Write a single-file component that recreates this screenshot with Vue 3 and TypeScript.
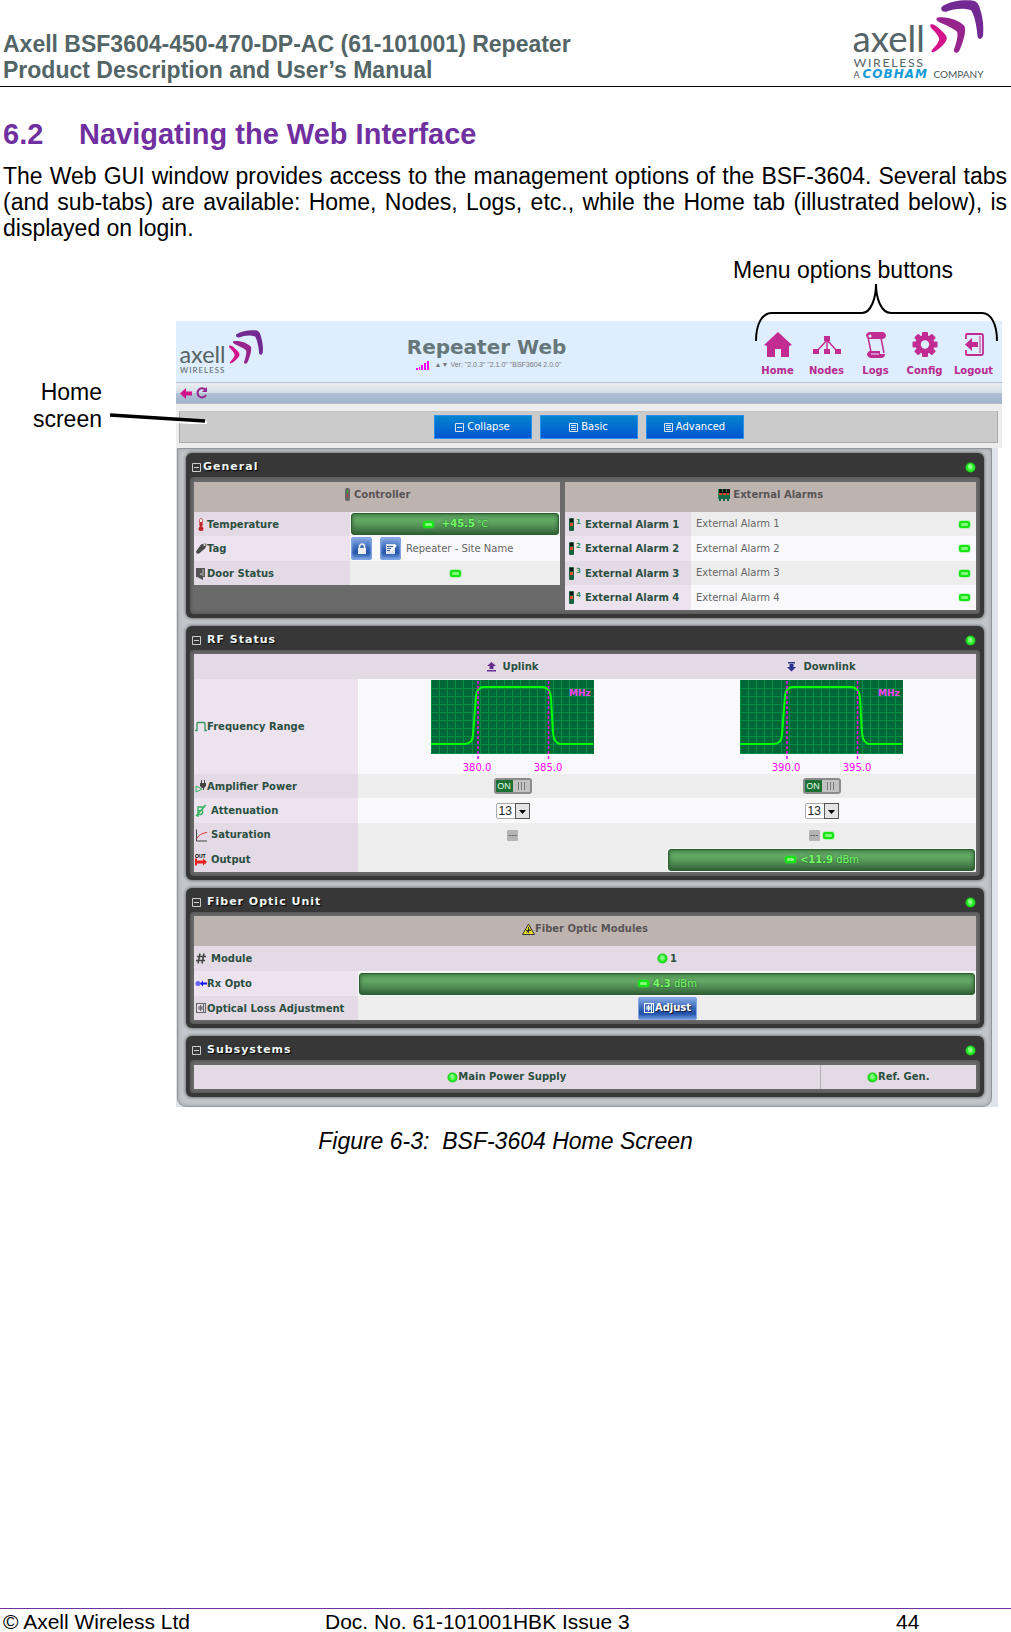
<script setup lang="ts">
import { ref } from 'vue'

interface MenuItem {
  id: string
  label: string
}

interface Band {
  id: string
  low: string
  high: string
}

const menu: MenuItem[] = [
  { id: 'home', label: 'Home' },
  { id: 'nodes', label: 'Nodes' },
  { id: 'logs', label: 'Logs' },
  { id: 'config', label: 'Config' },
  { id: 'logout', label: 'Logout' },
]

const bands: Band[] = [
  { id: 'uplink', low: '380.0', high: '385.0' },
  { id: 'downlink', low: '390.0', high: '395.0' },
]

const alarms: number[] = [1, 2, 3, 4]
const power = ref<Record<string, boolean>>({ uplink: true, downlink: true })
const attenuation = ref<Record<string, string>>({ uplink: '13', downlink: '13' })
</script>

<template>
  <div class="page">
    <svg class="defs" width="0" height="0" aria-hidden="true">
      <defs>
        <radialGradient id="ledFill">
          <stop offset="0" stop-color="#a4ff9c" />
          <stop offset="0.6" stop-color="#2bf02b" />
          <stop offset="1" stop-color="#14c814" />
        </radialGradient>
        <symbol id="axell" viewBox="402 0 390 240" preserveAspectRatio="xMinYMin meet">
          <text x="399" y="157" font-family="Lato, sans-serif" font-size="110" fill="#566466">axell</text>
          <text x="402" y="202" font-family="Lato, sans-serif" font-size="37" letter-spacing="5" fill="#566466">WIRELESS</text>
          <path fill="#d4148c" d="M632 74C640 70 650 77 658 85C670 96 682 106 682 116C680 128 660 148 641 157C636 158 634 154 638 149C648 138 659 126 659 116C656 104 642 90 634 83Z" />
          <path fill="#96248c" d="M652 53C680 47 718 60 735 78C742 98 726 138 719 153C714 161 703 160 703 150C711 130 716 106 713 96C700 83 676 75 660 67C652 63 649 58 652 53Z" />
          <path fill="#722a92" d="M667 20C692 3 730-1 762 2C776 5 780 18 786 42C791 66 794 86 791 106C788 120 776 120 774 108C772 80 765 46 755 31C732 22 702 27 680 35C667 37 662 28 667 20Z" />
        </symbol>
        <symbol id="led" viewBox="0 0 13 9">
          <rect x="0" y="0" width="13" height="9" rx="4" fill="#38f038" opacity="0.3" />
          <rect x="1" y="1" width="11" height="7" rx="2" fill="#14e614" />
          <rect x="3" y="3" width="7" height="3" rx="1" fill="#84fb7a" />
        </symbol>
        <symbol id="dot" viewBox="0 0 11 11">
          <circle cx="5.5" cy="5.5" r="5" fill="url(#ledFill)" />
          <circle cx="5" cy="4" r="2" fill="#9dff96" opacity="0.7" />
        </symbol>
        <symbol id="icon-home" viewBox="0 0 28 26">
          <path fill="#c12b92" d="M14 0L28 13L25 14V25H17V17H11V25H3V14L0 13Z" />
        </symbol>
        <symbol id="icon-nodes" viewBox="0 0 28 26">
          <path fill="none" stroke="#c12b92" stroke-width="1.4" d="M14 8L4 19M14 8V19M14 8L24 19" />
          <path fill="#c12b92" d="M11 4h6v5h-6zM0 17h6v5H0zM11 17h6v5h-6zM22 17h6v5h-6z" />
        </symbol>
        <symbol id="icon-logs" viewBox="0 0 28 26">
          <path fill="none" stroke="#c12b92" stroke-width="1.5" d="M6 5L9 20M19 6L22 21" />
          <path fill="#c12b92" d="M8 0H21Q24 1 24 4Q23 7 20 7H8Q4 6 4 3Q5 0 8 0ZM8 19H18V22H23Q23 25 20 26H9Q5 25 5 22Q6 19 8 19Z" />
          <circle cx="8" cy="4" r="1.6" fill="#deeefe" />
          <path stroke="#deeefe" d="M9 22H17" />
        </symbol>
        <symbol id="icon-config" viewBox="0 0 28 26">
          <g fill="#c12b92">
            <rect v-for="a in [0, 45, 90, 135]" :key="a" x="11" y="0" width="6" height="25" rx="1" :transform="`rotate(${a} 14 12.5)`" />
            <circle cx="14" cy="12.5" r="9.5" />
          </g>
          <circle cx="14" cy="12.5" r="4.2" fill="#deeefe" />
        </symbol>
        <symbol id="icon-logout" viewBox="0 0 28 26">
          <path fill="none" stroke="#c12b92" stroke-width="1.8" d="M6 7V3Q6 2 7 2H21Q23 2 23 4V21Q23 23 21 23H7Q6 23 6 22V18" />
          <path fill="#c12b92" d="M5 12.5L12 6V10H18V15H12V19Z" />
          <path stroke="#c12b92" d="M20 4V21" />
        </symbol>
        <symbol id="minus-box" viewBox="0 0 9 9">
          <path fill="none" stroke="currentColor" d="M.5.5h8v8h-8zM2 4.5h5" />
        </symbol>
        <symbol id="list-box" viewBox="0 0 9 9">
          <path fill="none" stroke="currentColor" d="M.5.5h8v8h-8zM2 2.5h5M2 4.5h5M2 6.5h5" />
        </symbol>
        <symbol id="module" viewBox="0 0 12 12">
          <path fill="none" stroke="currentColor" d="M1 1.5H11M1 10.5H11M10.5 1V11M1.5 1V11M8.5 2V10" />
          <path stroke="currentColor" d="M3 6H8M5.500 3V9M3.500 4L7.500 8M7.500 4L3.500 8" />
        </symbol>
      </defs>
    </svg>

    <header class="doc-header">
      <div class="doc-title">Axell BSF3604-450-470-DP-AC (61-101001) Repeater<br />Product Description and User’s Manual</div>
      <svg class="doc-logo" viewBox="0 0 130 80" role="img" aria-label="Axell Wireless">
        <use href="#axell" width="130" height="80" />
        <text x="0" y="78" font-family="Lato, sans-serif" font-size="9" fill="#4b5557">A</text>
        <text x="9" y="78" font-family="DejaVu Sans, sans-serif" font-size="12" font-weight="bold" font-style="italic" letter-spacing="1" fill="#189ad6">COBHAM</text>
        <text x="80" y="78" font-family="Lato, sans-serif" font-size="10" fill="#4b5557">COMPANY</text>
      </svg>
    </header>

    <main>
      <h1><span class="num">6.2</span>Navigating the Web Interface</h1>
      <p class="intro">The Web GUI window provides access to the management options of the BSF-3604. Several tabs (and sub-tabs) are available: Home, Nodes, Logs, etc., while the Home tab (illustrated below), is displayed on login.</p>

      <figure>
        <div class="callout-menu">
          Menu options buttons
          <svg class="brace" viewBox="0 0 245 60" width="245" height="60" aria-hidden="true">
            <path fill="none" stroke="#000" stroke-width="2" d="M2 59C2 42 8 31 18 31H108C117 31 122 16 122 2C122 16 127 31 137 31H228C237 31 243 42 243 59" />
          </svg>
        </div>
        <div class="figure-body">
          <div class="callout-home">
            Home<br />screen
            <svg class="pointer" viewBox="0 0 100 12" width="100" height="12" aria-hidden="true">
              <path stroke="#fff" stroke-width="4" d="M3 5L97 11" />
              <path stroke="#000" stroke-width="3.400" d="M0 3L95 9" />
            </svg>
          </div>

          <div class="gui">
            <div class="banner">
              <svg class="gui-logo" viewBox="0 0 130 69" role="img" aria-label="Axell Wireless"><use href="#axell" width="130" height="80" /></svg>
              <div class="brand">
                <div class="product">Repeater Web</div>
                <div class="version">
                  <svg width="13" height="9" viewBox="0 0 13 9" aria-hidden="true"><path fill="#f0f" d="M0 7h2v2H0zM3 6h1v3H3zM5 4h2v5H5zM8 2h2v7H8zM11 0h2v9h-2z" /></svg>
                  <span>▲▼ Ver: "2.0.3" "2.1.0" "BSF3604 2.0.0"</span>
                </div>
              </div>
              <nav>
                <a v-for="m in menu" :key="m.id" href="#">
                  <svg width="28" height="26" aria-hidden="true"><use :href="`#icon-${m.id}`" width="28" height="26" /></svg>
                  {{ m.label }}
                </a>
              </nav>
            </div>

            <div class="toolbar">
              <button type="button" aria-label="Back">
                <svg width="12" height="11" viewBox="0 0 12 11"><path fill="#d0148c" d="M0 5.500L6 0V3.500H12V7.500H6V11Z" /></svg>
              </button>
              <button type="button" aria-label="Reload">
                <svg width="12" height="12" viewBox="0 0 12 12"><path fill="none" stroke="#93278f" stroke-width="2" d="M9.500 3A4.500 4.500 0 1 0 10 8" /><path fill="#93278f" d="M11 0V5H6Z" /></svg>
              </button>
            </div>

            <div class="actions-wrap">
              <div class="actions">
                <button type="button"><svg width="9" height="9"><use href="#minus-box" width="9" height="9" /></svg>Collapse</button>
                <button type="button"><svg width="9" height="9"><use href="#list-box" width="9" height="9" /></svg>Basic</button>
                <button type="button"><svg width="9" height="9"><use href="#list-box" width="9" height="9" /></svg>Advanced</button>
              </div>
            </div>

            <div class="board">
              <div class="board-inner">
                <section>
                  <h2><svg class="box" width="9" height="9"><use href="#minus-box" width="9" height="9" /></svg>General<svg class="state" width="11" height="11"><use href="#dot" width="11" height="11" /></svg></h2>
                  <div class="well tall split">
                    <table class="controller">
                      <colgroup><col class="c-name" /><col /></colgroup>
                      <thead>
                        <tr class="cap"><th colspan="2">
                          <svg width="7" height="13" viewBox="0 0 7 13"><rect x="1" width="5" height="13" rx="2" fill="#666" /><path stroke="#3b3" d="M3.500 2V5" /><path stroke="#d33" d="M3.500 6V9" /></svg>
                          Controller</th></tr>
                      </thead>
                      <tbody>
                        <tr>
                          <th><svg class="ic" viewBox="0 0 12 13"><rect x="4.500" y=".5" width="3" height="8" rx="1.500" fill="#fff" stroke="#c66" /><path fill="#c1272d" d="M5 4h2v4.500a2.500 2.500 0 1 1-2 0Z" /></svg>Temperature</th>
                          <td class="fill"><div class="bar"><svg width="13" height="9"><use href="#led" width="13" height="9" /></svg><b>&nbsp;+45.5</b><small>°C</small></div></td>
                        </tr>
                        <tr>
                          <th><svg class="ic" viewBox="0 0 12 12"><path fill="#4b4b4b" d="M6 2L10 1Q12 1 11 4L10 6L4 11Q1 12 1 9Z" /><circle cx="9.500" cy="2.500" r="1" fill="#eee" /></svg>Tag</th>
                          <td><div class="tagline">
                            <button type="button" class="sq" aria-label="Lock"><svg width="10" height="12" viewBox="0 0 10 12"><path fill="none" stroke="#eee" stroke-width="1.500" d="M2.500 6V3.500a2.500 2.500 0 0 1 5 0V6" /><rect x="1" y="5" width="8" height="6" fill="#eee" /></svg></button>
                            <button type="button" class="sq" aria-label="Edit"><svg width="12" height="12" viewBox="0 0 12 12"><path fill="#dde4f0" d="M1 1h9v10H1z" /><path stroke="#45639c" d="M2 3.500h6M2 5.500h4M2 7.500h3" /><path stroke="#fff" stroke-width="2" d="M11 2L6 8" /></svg></button>
                            <span>Repeater - Site Name</span>
                          </div></td>
                        </tr>
                        <tr>
                          <th><svg class="ic" viewBox="0 0 12 13"><path fill="#555" d="M1 1H10V10H8V13L2 10H1Z" /><path fill="#888" d="M7 2h2v7H7z" /><path stroke="#ddd" d="M6 6v2" /></svg>Door Status</th>
                          <td class="mid"><svg width="13" height="9"><use href="#led" width="13" height="9" /></svg></td>
                        </tr>
                      </tbody>
                    </table>

                    <table class="alarms">
                      <colgroup><col class="c-alarm" /><col /><col class="c-led" /></colgroup>
                      <thead>
                        <tr class="cap"><th colspan="3">
                          <svg width="12" height="12" viewBox="0 0 12 12"><path fill="#111" d="M0 0h12v4H0z" /><path fill="#166b45" d="M0 4h12v6H0zM1 10h2v2H1zM5 10h2v2H5zM9 10h2v2H9z" /><path stroke="#e0402a" stroke-width="2" d="M1 5h10" stroke-dasharray="3 1" /><path stroke="#2a8a5a" d="M.5 0v10M4.500 0v3M8.500 0v3" /></svg>
                          External Alarms</th></tr>
                      </thead>
                      <tbody>
                        <tr v-for="n in alarms" :key="n">
                          <th><svg class="alarm" width="13" height="13" viewBox="0 0 13 13"><rect x="1" width="5" height="13" rx="1" fill="#17633f" /><path fill="#111" d="M2 1h3v3H2z" /><path fill="#e04a2a" d="M2 5h3v3H2z" /><text x="8" y="6" font-size="7" font-family="DejaVu Sans, sans-serif" fill="#2f8a5c">{{ n }}</text></svg>External Alarm {{ n }}</th>
                          <td>External Alarm {{ n }}</td>
                          <td><svg width="13" height="9"><use href="#led" width="13" height="9" /></svg></td>
                        </tr>
                      </tbody>
                    </table>
                  </div>
                </section>

                <section>
                  <h2><svg class="box" width="9" height="9"><use href="#minus-box" width="9" height="9" /></svg><span class="sp">RF Status</span><svg class="state" width="11" height="11"><use href="#dot" width="11" height="11" /></svg></h2>
                  <div class="well">
                    <table class="rf">
                      <colgroup><col class="c-label" /><col /><col /></colgroup>
                      <thead>
                        <tr class="lilac">
                          <td></td>
                          <th><svg width="9" height="10" viewBox="0 0 9 10"><path fill="#662d91" d="M4.500 0L9 4H6.500V7H2.500V4H0ZM0 8h9v1.500H0z" /></svg>&nbsp; Uplink</th>
                          <th><svg width="9" height="10" viewBox="0 0 9 10"><path fill="#2e3192" d="M4.500 9.500L9 5H6.500V2H2.500V5H0ZM1 0h7v1.500H1z" /></svg>&nbsp; Downlink</th>
                        </tr>
                      </thead>
                      <tbody>
                        <tr class="graph-row">
                          <th><svg class="ic" viewBox="0 0 12 10"><path fill="none" stroke="#2f9a5c" stroke-width="1.300" d="M0 9H2V2Q2 1 3 1H9Q10 1 10 2V9H12" /></svg>Frequency Range</th>
                          <td v-for="b in bands" :key="b.id" class="mid">
                            <svg class="graph" width="163" height="92" viewBox="0 0 163 92" role="img" :aria-label="b.id">
                              <rect width="163" height="74" fill="#006837" />
                              <path stroke="#008f45" d="M8.500 0V74M16.500 0V74M24.500 0V74M32.500 0V74M41.500 0V74M49.500 0V74M57.500 0V74M65.500 0V74M73.500 0V74M81.500 0V74M89.500 0V74M98.500 0V74M106.500 0V74M114.500 0V74M122.500 0V74M130.500 0V74M138.500 0V74M146.500 0V74M155.500 0V74M0 8.500H163M0 16.500H163M0 24.500H163M0 32.500H163M0 40.500H163M0 48.500H163M0 56.500H163M0 64.500H163M0 73.500H163M.5 0V74" />
                              <path fill="none" stroke="#0f0" stroke-width="2" d="M0 64H34Q42 63 42 55L45 16Q46 7 53 7H111Q119 7 120 18L122 53Q123 63 129 64H162" />
                              <path stroke="#f0f" stroke-width="1.500" stroke-dasharray="3 2" d="M47 1V81M117.500 1V81" />
                              <text x="138" y="16" font-size="9" font-weight="bold" fill="#ff40ff">MHz</text>
                              <text x="46" y="91" font-size="10" text-anchor="middle" fill="#f0f">{{ b.low }}</text>
                              <text x="117" y="91" font-size="10" text-anchor="middle" fill="#f0f">{{ b.high }}</text>
                            </svg>
                          </td>
                        </tr>
                        <tr>
                          <th><svg class="ic" viewBox="0 0 12 13"><path fill="none" stroke="#2fb45c" d="M1 6V12L7 9Z" /><path fill="#444" d="M5 3h6v3L9 8H7L5 6ZM6 0h1v3H6zM9 0h1v3H9zM8 8h1v2H8z" /></svg>Amplifier Power</th>
                          <td v-for="b in bands" :key="b.id" class="mid">
                            <label class="switch"><input v-model="power[b.id]" type="checkbox" :aria-label="`Amplifier power, ${b.id}`" /><span class="on">ON</span><span class="knob"></span></label>
                          </td>
                        </tr>
                        <tr>
                          <th><svg class="ic" viewBox="0 0 12 13"><path fill="none" stroke="#35b45c" stroke-width="1.400" d="M3 13V10M8 3L11 1M3 3H7Q9 5 6 6.500H3ZM3 6.500H7Q9 9 6 10.500H3ZM1 12L10 2" /></svg><span class="sp">Attenuation</span></th>
                          <td v-for="b in bands" :key="b.id" class="mid">
                            <span class="pick">
                              <select v-model="attenuation[b.id]" :aria-label="`Attenuation, ${b.id}`"><option>13</option></select>
                              <svg width="15" height="16" viewBox="0 0 15 16" aria-hidden="true"><rect x=".5" y=".5" width="14" height="15" fill="#e4e4e4" stroke="#555" /><path d="M4 7H11L7.500 11Z" /></svg>
                            </span>
                          </td>
                        </tr>
                        <tr>
                          <th><svg class="ic" viewBox="0 0 12 12"><path fill="none" stroke="#444" d="M1.500 0V11.500H12" /><path fill="none" stroke="#d33" d="M2 9Q4 4 12 3" /></svg><span class="sp">Saturation</span></th>
                          <td class="mid"><span class="dots">---</span></td>
                          <td class="mid"><span class="dots">---</span><svg class="after" width="13" height="9"><use href="#led" width="13" height="9" /></svg></td>
                        </tr>
                        <tr class="grey">
                          <th><svg class="ic" viewBox="0 0 12 12"><text x="0" y="4" font-size="5" font-weight="bold" font-family="Liberation Sans, sans-serif">OUT</text><path fill="#f02020" d="M0 5h2v2h6V5l4 3.500-4 3.500v-2H2v2H0z" /></svg><span class="sp">Output</span></th>
                          <td></td>
                          <td class="fill"><div class="bar"><svg width="13" height="9"><use href="#led" width="13" height="9" /></svg><b>&lt;11.9</b>&nbsp;dBm</div></td>
                        </tr>
                      </tbody>
                    </table>
                  </div>
                </section>

                <section>
                  <h2><svg class="box" width="9" height="9"><use href="#minus-box" width="9" height="9" /></svg><span class="sp">Fiber Optic Unit</span><svg class="state" width="11" height="11"><use href="#dot" width="11" height="11" /></svg></h2>
                  <div class="well">
                    <table class="fiber">
                      <colgroup><col class="c-label" /><col /></colgroup>
                      <thead>
                        <tr class="cap"><th colspan="2"><svg width="13" height="12" viewBox="0 0 13 12"><path fill="#e8e020" stroke="#333" d="M6.500 1L12.500 11.500H.5Z" /><path stroke="#333" d="M6.500 4V10M4 7.500H9M4.500 9.500L8.500 6" /></svg>Fiber Optic Modules</th></tr>
                      </thead>
                      <tbody>
                        <tr class="lilac">
                          <th><svg class="ic" viewBox="0 0 12 12"><path fill="none" stroke="#444" stroke-width="1.500" d="M5 1L3 11M9 1L7 11M2 4H11M1 8H10" /></svg><span class="sp">Module</span></th>
                          <th class="mid"><svg class="lead" width="11" height="11"><use href="#dot" width="11" height="11" /></svg>1</th>
                        </tr>
                        <tr>
                          <th><svg class="ic" viewBox="0 0 12 8"><circle cx="3" cy="4" r="2.500" fill="#44f" opacity=".8" /><path fill="#11e" d="M5 4L8 1V3H12V5H8V7Z" /></svg>Rx Opto</th>
                          <td class="fill"><div class="bar"><svg width="13" height="9"><use href="#led" width="13" height="9" /></svg><b>4.3</b>&nbsp;dBm</div></td>
                        </tr>
                        <tr>
                          <th><svg class="ic grey-ic"><use href="#module" width="12" height="12" /></svg>Optical Loss Adjustment</th>
                          <td class="mid"><button type="button" class="adjust"><svg width="12" height="12"><use href="#module" width="12" height="12" /></svg>Adjust</button></td>
                        </tr>
                      </tbody>
                    </table>
                  </div>
                </section>

                <section>
                  <h2><svg class="box" width="9" height="9"><use href="#minus-box" width="9" height="9" /></svg><span class="sp">Subsystems</span><svg class="state" width="11" height="11"><use href="#dot" width="11" height="11" /></svg></h2>
                  <div class="well tall">
                    <table class="subs">
                      <colgroup><col /><col class="c-ref" /></colgroup>
                      <tbody>
                        <tr class="lilac">
                          <th class="mid"><svg width="11" height="11"><use href="#dot" width="11" height="11" /></svg>Main Power Supply</th>
                          <th class="mid"><svg width="11" height="11"><use href="#dot" width="11" height="11" /></svg>Ref. Gen.</th>
                        </tr>
                      </tbody>
                    </table>
                  </div>
                </section>
              </div>
            </div>
          </div>
        </div>
        <figcaption>Figure 6-3:&nbsp; BSF-3604 Home Screen</figcaption>
      </figure>
    </main>

    <footer>
      <span>© Axell Wireless Ltd</span>
      <span>Doc. No. 61-101001HBK Issue 3</span>
      <span>44</span>
    </footer>
  </div>
</template>

<style>
body {
  margin: 0;
  background: #fff;
}
</style>

<style scoped>
.page {
  display: flex;
  flex-direction: column;
  min-height: 100vh;
  font: 23px/26px "Liberation Sans", Arial, sans-serif;
  color: #000;
}
.defs {
  position: absolute;
}
main {
  flex: 1;
}
.doc-header {
  display: flex;
  justify-content: space-between;
  align-items: flex-end;
  padding: 0 27px 3px 3px;
  border-bottom: 1px solid #000;
}
.doc-title {
  font-weight: bold;
  color: #536566;
}
.doc-logo {
  width: 131px;
  height: 80px;
  margin-bottom: 3px;
  overflow: visible;
}
h1 {
  display: flex;
  margin: 30px 3px 12px;
  font-size: 29px;
  line-height: 34px;
  color: #7030a0;
}
.num {
  width: 76px;
}
.intro {
  margin: 0 4px 0 3px;
  text-align: justify;
}
figure {
  margin: 0;
}
.callout-menu {
  position: relative;
  box-sizing: border-box;
  height: 80px;
  padding: 16px 58px 0 0;
  text-align: right;
}
.brace {
  position: absolute;
  right: 12px;
  top: 41px;
  z-index: 1;
}
.figure-body {
  display: grid;
  grid-template-columns: 176px minmax(0, 1fr);
  padding-right: 9px;
}
.callout-home {
  position: relative;
  padding: 58px 74px 0 0;
  text-align: right;
  line-height: 27px;
}
.pointer {
  position: absolute;
  left: 110px;
  top: 91px;
  z-index: 1;
}
figcaption {
  margin-top: 21px;
  text-align: center;
  font-style: italic;
}
footer {
  box-sizing: border-box;
  display: grid;
  grid-template-columns: 322fr 571fr 115fr;
  height: 24px;
  padding: 3px 0 0 3px;
  border-top: 1px solid #7030a0;
  font-size: 21px;
  line-height: 20px;
}

/* Web GUI */
.gui {
  font: 10px/12px "DejaVu Sans", Verdana, sans-serif;
  color: #666;
}
.gui button {
  font: inherit;
  cursor: pointer;
}
.banner {
  display: flex;
  box-sizing: border-box;
  height: 61px;
  padding: 9px 4px 0;
  background: #deeefe;
}
.gui-logo {
  width: 83px;
  height: 44px;
}
.brand {
  flex: 1;
  padding: 5px 43px 0 0;
  text-align: center;
}
.product {
  font-size: 20px;
  line-height: 24px;
  font-weight: bold;
  color: #66777a;
}
.version {
  display: flex;
  justify-content: center;
  align-items: center;
  gap: 6px;
  padding-left: 4px;
  font: 7px/12px "Liberation Sans", Arial, sans-serif;
  color: #777;
}
nav {
  display: flex;
}
nav a {
  display: flex;
  flex-direction: column;
  align-items: center;
  gap: 7px;
  width: 49px;
  padding-top: 2px;
  font-weight: bold;
  color: #b82a8e;
  text-decoration: none;
}
.toolbar {
  display: flex;
  align-items: center;
  gap: 4px;
  box-sizing: border-box;
  height: 22px;
  padding: 0 4px;
  border-top: 1px solid #b4c4d6;
  border-bottom: 1px solid #b9bec4;
  background: linear-gradient(#eceff2, #d2dbe3 50%, #b4c3d6 50%, #9cb2cc);
}
.toolbar button {
  display: flex;
  padding: 0;
  border: 0;
  background: none;
}
.actions-wrap {
  padding: 7px 4px 5px 3px;
  background: #ededed;
}
.actions {
  display: flex;
  justify-content: center;
  gap: 8px;
  box-sizing: border-box;
  height: 32px;
  padding: 3px 0;
  border: 1px solid #a9a9a9;
  border-top-color: #c4c4c4;
  background: #cbcbcb;
}
.actions button {
  display: flex;
  align-items: center;
  justify-content: center;
  gap: 3px;
  width: 98px;
  height: 24px;
  padding: 0;
  border: 1px solid #2a90ea;
  background: linear-gradient(#0484cf, #0056d2);
  color: #fff;
}
.actions svg {
  color: #d8e4ee;
}
.board {
  margin-right: 4px;
  background: #dfe3ec;
}
.board-inner {
  display: flex;
  flex-direction: column;
  gap: 8px;
  margin: 0 6px 0 1px;
  padding: 4px 7px 9px 8px;
  border: 1px solid #94969b;
  border-radius: 0 0 9px 9px;
  background: #c3c6cb;
  box-shadow: inset 0 0 4px #9b9ea3;
}
section {
  padding: 0 4px 4px;
  border-radius: 6px;
  background: #373737;
  box-shadow: 0 0 3px 1px #77797d;
}
h2 {
  display: flex;
  align-items: center;
  box-sizing: border-box;
  height: 24px;
  margin: 0;
  padding: 4px 4px 0 2px;
  font-size: 11px;
  line-height: 14px;
  letter-spacing: 1px;
  color: #eef6f6;
  text-shadow: 1px 1px 1px #000;
}
.box {
  margin-right: 2px;
  color: #ccc;
}
.state {
  margin-left: auto;
}
.sp {
  margin-left: 4px;
}
.well {
  padding: 4px;
  border-radius: 4px;
  background: #6a6a6a;
  box-shadow: inset 0 0 4px #4a4a4a;
}
.tall {
  padding-top: 5px;
}
.split {
  display: grid;
  grid-template-columns: 366fr 411fr;
  gap: 5px;
  align-items: start;
}
table {
  width: 100%;
  table-layout: fixed;
  border-collapse: collapse;
}
th,
td {
  height: 24px;
  padding: 0;
  text-align: left;
  vertical-align: middle;
  white-space: nowrap;
}
th svg,
td svg {
  vertical-align: middle;
}
tbody th {
  color: #2b4f41;
}
tbody tr:nth-child(odd) th {
  background: #e3dae5;
}
tbody tr:nth-child(even) th {
  background: #ece3ef;
}
tbody tr:nth-child(odd) td {
  background: #ededee;
}
tbody tr:nth-child(even) td {
  height: 25px;
  background: #f9f9fb;
}
.cap th {
  box-sizing: border-box;
  height: 30px;
  padding-bottom: 5px;
  text-align: center;
  color: #595455;
  background: #beb4af;
}
.lilac th,
.lilac td {
  height: 25px;
  text-align: center;
  color: #2b4f41;
  background: #e3dae5;
}
.lilac th:first-child:not(.mid) {
  text-align: left;
}
.subs .lilac th {
  height: 24px;
}
.subs .lilac th + th {
  border-left: 1px solid #b5afb8;
}
.c-name {
  width: 156px;
}
.c-alarm {
  width: 126px;
}
.c-led {
  width: 18px;
}
.c-label {
  width: 164px;
}
.c-ref {
  width: 156px;
}
.ic {
  width: 12px;
  height: 13px;
  margin: 0 0 0 1px;
}
.grey-ic {
  color: #666;
}
.lead {
  margin-right: 2px;
}
.alarm {
  margin: 0 4px 0 3px;
}
.alarms td:nth-child(2) {
  padding-left: 5px;
}
.mid,
.lilac .mid {
  text-align: center;
}
.rf tbody tr.graph-row td,
.graph-row th {
  height: 95px;
}
.rf tbody tr.graph-row td,
.rf tbody tr:nth-child(3) td {
  background: #f9f9fb;
}
.rf tbody tr:nth-child(2) td,
.rf tbody tr:nth-child(4) td,
.rf tbody tr.grey td {
  height: 24px;
  background: #ededee;
}
.rf tbody tr:nth-child(3) td,
.rf tbody tr.grey td {
  height: 25px;
}
.rf tbody tr.graph-row th,
.rf tbody tr:nth-child(3) th {
  background: #ece3ef;
}
.rf tbody tr:nth-child(2) th,
.rf tbody tr:nth-child(4) th {
  background: #e3dae5;
}
.graph {
  display: block;
  margin: 1px auto 2px;
}
.bar {
  display: flex;
  align-items: center;
  justify-content: center;
  box-sizing: border-box;
  height: 22px;
  margin: 0 1px;
  border: 1px solid #2d5c30;
  border-radius: 3px;
  background: linear-gradient(#5a9f5c, #64a866 35%, #549056 60%, #34683a);
  box-shadow: inset 0 0 4px #2d5c30, 0 0 0 1px #f4f8f4;
  color: #74fb68;
  text-shadow: 0 0 2px #1f5a22;
}
.bar svg {
  margin-right: 3px;
}
.bar small {
  margin-left: 2px;
  font-size: 9px;
}
.tagline {
  display: flex;
  align-items: center;
  gap: 8px;
  padding-left: 1px;
}
.tagline span {
  margin-left: -3px;
}
.sq {
  display: flex;
  align-items: center;
  justify-content: center;
  width: 21px;
  height: 23px;
  padding: 0;
  border: 1px solid #7ea4e2;
  border-radius: 2px;
  background: linear-gradient(#84a8e4, #3363b4 50%, #2353a8 70%, #6c98dc);
  box-shadow: inset 0 0 3px #8fb2ea;
}
.adjust {
  display: inline-flex;
  align-items: center;
  justify-content: center;
  width: 59px;
  height: 23px;
  padding: 0;
  border: 1px solid #7ea4e2;
  border-radius: 2px;
  background: linear-gradient(#84a8e4, #3363b4 50%, #2353a8 75%, #6c98dc);
  color: #fff;
  text-shadow: 1px 1px 1px #113;
  vertical-align: middle;
}
.gui .adjust {
  font-weight: bold;
}
.switch {
  display: inline-flex;
  box-sizing: border-box;
  width: 38px;
  height: 16px;
  border: 2px solid #8b8b8b;
  border-radius: 3px;
  vertical-align: middle;
  background: #1d7034;
}
.switch input {
  position: absolute;
  opacity: 0;
  margin: 0;
}
.on {
  flex: 1;
  font: 9px/12px "Liberation Sans", Arial, sans-serif;
  text-align: center;
  color: #e8fbe8;
}
.knob {
  width: 17px;
  background: repeating-linear-gradient(90deg, #777 0 1px, #c8c8c8 1px 3px) center / 7px 8px no-repeat, #c2c2c2;
}
.pick {
  display: inline-grid;
  grid-template-columns: 19px 15px;
  vertical-align: middle;
}
.pick select {
  grid-area: 1 / 1 / 2 / 3;
  box-sizing: border-box;
  width: 34px;
  height: 16px;
  padding: 0 0 0 2px;
  border: 1px solid #aaa;
  border-radius: 2px;
  appearance: none;
  background: #fff;
  font: 12px/14px "Liberation Sans", Arial, sans-serif;
  color: #222;
}
.pick svg {
  grid-area: 1 / 2;
  z-index: 1;
  pointer-events: none;
}
.dots {
  display: inline-block;
  width: 11px;
  height: 11px;
  border-radius: 1px;
  background: #b4b4b4;
  font-size: 8px;
  line-height: 11px;
  text-align: center;
  color: #444;
  vertical-align: middle;
}
.after {
  margin-left: 2px;
}
</style>
